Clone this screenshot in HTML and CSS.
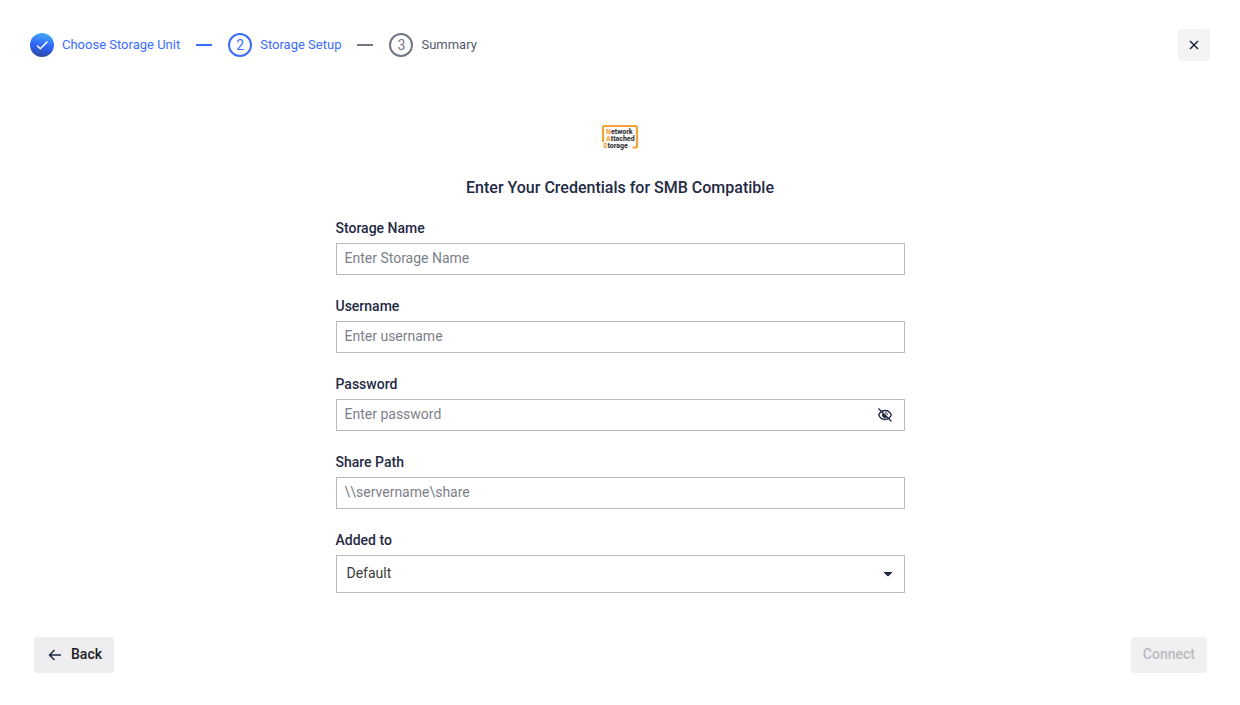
FILE: index.html
```
<!DOCTYPE html>
<html lang="en">
<head>
    <meta charset="UTF-8">
    <meta name="viewport" content="width=device-width, initial-scale=1.0">
    <title>Storage Setup</title>
    <link rel="stylesheet" href="styles.css">
</head>
<body>
    <header class="header">
        <ol class="steps">
            <li class="step done">
                <span class="circle">
                    <svg width="24" height="24" viewBox="0 0 24 24" fill="none" stroke="#fff" stroke-width="1.5"><path d="M7 12.5l3.3 3.2L17.5 8.5"/></svg>
                </span>
                <span>Choose Storage Unit</span>
            </li>
            <li class="step active">
                <span class="circle">2</span>
                <span>Storage Setup</span>
            </li>
            <li class="step">
                <span class="circle">3</span>
                <span class="step-name">Summary</span>
            </li>
        </ol>
        <button type="button" class="close" aria-label="Close">
            <svg width="10" height="10" viewBox="0 0 10 10" stroke="#1c2740" stroke-width="1.5"><path d="M1 1l8 8M9 1L1 9"/></svg>
        </button>
    </header>

    <main class="container">
        <svg class="logo" width="38" height="28" viewBox="0 0 38 28">
            <path d="M2 18V3.5Q2 2 3.5 2H34.5Q36 2 36 3.5V22Q36 23.5 34.5 23.5H31.5" fill="none" stroke="#f2a33c" stroke-width="2.2"/>
            <g class="logo-text">
                <text x="5" y="10"><tspan class="initial">N</tspan>etwork</text>
                <text x="5" y="17"><tspan class="initial">A</tspan>ttached</text>
                <text x="2" y="24"><tspan class="initial">S</tspan>torage</text>
            </g>
        </svg>
        <h1>Enter Your Credentials for SMB Compatible</h1>

        <form id="storage-form" class="form">
            <div class="field">
                <label for="name">Storage Name</label>
                <input type="text" id="name" placeholder="Enter Storage Name">
            </div>
            <div class="field">
                <label for="username">Username</label>
                <input type="text" id="username" placeholder="Enter username">
            </div>
            <div class="field">
                <label for="password">Password</label>
                <div class="control">
                    <input type="password" id="password" placeholder="Enter password">
                    <button type="button" class="toggle" aria-label="Show password">
                        <svg width="16" height="16" viewBox="0 0 16 16" fill="none" stroke="#1c2740" stroke-width="1.3">
                            <path d="M1.7 8C3 5 5.3 3.5 8 3.5S13 5 14.3 8C13 11 10.7 12.5 8 12.5S3 11 1.7 8z"/>
                            <path d="M5.8 6.8A2.5 2.5 0 0 0 9.3 10.2z" fill="#1c2740" stroke-width="1"/>
                            <path d="M8 5.6A2.4 2.4 0 0 1 10.4 8" stroke-width="1"/>
                            <path d="M1.5 1.5l13 13"/>
                        </svg>
                    </button>
                </div>
            </div>
            <div class="field">
                <label for="path">Share Path</label>
                <input type="text" id="path" placeholder="\\servername\share">
            </div>
            <div class="field">
                <label for="added">Added to</label>
                <div class="control">
                    <select id="added">
                        <option selected>Default</option>
                    </select>
                    <svg class="arrow" width="10" height="5" viewBox="0 0 10 5"><path d="M1 0h8q.5 0 .2.5L5.7 4q-.7.6-1.4 0L.8.5Q.5 0 1 0z" fill="#1c2740"/></svg>
                </div>
            </div>
        </form>
    </main>

    <footer class="footer">
        <button type="button" class="btn">
            <svg width="16" height="12" viewBox="0 0 16 12" fill="none" stroke="#1c2740" stroke-width="1.5"><path d="M15 7H3.5M8.5 2L3.5 7l5 5"/></svg>
            Back
        </button>
        <button type="submit" form="storage-form" class="btn" disabled>Connect</button>
    </footer>
</body>
</html>
```

FILE: styles.css
```
*{
    box-sizing: border-box;
}
body{
    margin: 0;
    min-height: 100vh;
    display: flex;
    flex-direction: column;
    background-color: #fff;
    font-family: Roboto, "Liberation Sans", sans-serif;
    font-size: 14px;
    line-height: 20px;
    color: #1f2a44;
}
button, input, select{
    font: inherit;
}
button{
    border: 0;
    padding: 0;
    display: flex;
    align-items: center;
    justify-content: center;
    cursor: pointer;
}

/* steps */
.header{
    display: flex;
    align-items: center;
    justify-content: space-between;
    padding: 29px 30px 0;
}
.steps{
    display: flex;
    gap: 16px;
    margin: 0;
    padding: 0;
    list-style: none;
    font-size: 13px;
}
.step{
    display: flex;
    align-items: center;
    gap: 8px;
    color: #737785;
}
.step + .step::before{
    content: "";
    width: 16px;
    height: 2px;
    margin-right: 8px;
    background-color: currentColor;
}
.step-name{
    color: #535a6a;
}
.circle{
    width: 24px;
    height: 24px;
    display: flex;
    align-items: center;
    justify-content: center;
    border: 2px solid currentColor;
    border-radius: 50%;
    font-size: 14px;
}
.done, .active{
    color: #3b6dff;
}
.done .circle{
    border: 0;
    background: linear-gradient(190deg, #42b0f5 5%, #3366ff 50%, #2748a0 95%);
}
.close{
    width: 32px;
    height: 32px;
    border-radius: 3px;
    background-color: #f3f3f3;
}

/* form */
.container{
    width: 100%;
    max-width: 569px;
    margin: 0 auto;
    padding: 63px 0 32px;
}
.logo{
    display: block;
    margin: 0 auto;
}
.logo-text{
    font-size: 7px;
    font-weight: 900;
    fill: #3d3d42;
}
.initial{
    fill: #f2a33c;
}
h1{
    margin: 26px 0 20px;
    text-align: center;
    font-size: 16px;
    line-height: 20px;
    font-weight: 500;
}
.form{
    display: flex;
    flex-direction: column;
    gap: 21px;
}
.field{
    display: flex;
    flex-direction: column;
    gap: 5px;
}
label{
    font-weight: 500;
}
.control{
    position: relative;
}
input, select{
    display: block;
    width: 100%;
    border: 1px solid #babbc2;
    border-radius: 0;
    background-color: #fff;
}
input{
    height: 32px;
    padding: 0 8px 2px;
    color: #1f2a44;
}
input::placeholder{
    color: #7c7f8a;
}
.toggle{
    position: absolute;
    top: 8px;
    right: 12px;
    background: transparent;
}
select{
    height: 38px;
    padding: 0 10px 2px;
    appearance: none;
    color: #3a3a3a;
}
.arrow{
    position: absolute;
    top: 17px;
    right: 12px;
    pointer-events: none;
}

/* buttons */
.footer{
    display: flex;
    justify-content: space-between;
    margin-top: auto;
    padding: 0 33px 32px 34px;
}
.btn{
    height: 36px;
    gap: 9px;
    padding: 0 12px 2px;
    border-radius: 3px;
    background-color: #eeeef1;
    color: #1b1c22;
    font-weight: 500;
}
.btn:disabled{
    background-color: #f0f0f1;
    color: #b9bac2;
    cursor: default;
}
```
